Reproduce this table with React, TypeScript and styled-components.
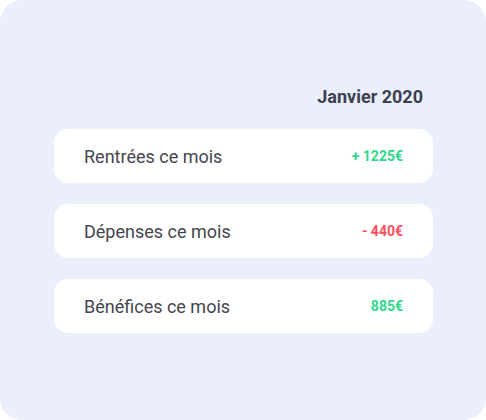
import React from "react";
import styled, { createGlobalStyle } from "styled-components";

const Global = createGlobalStyle`
  html, body { margin: 0; padding: 0; background: #ffffff; }
  body { font-family: Roboto, "Liberation Sans", sans-serif; }
`;

const Panel = styled.div`
  width: 486px;
  height: 420px;
  box-sizing: border-box;
  background: #ebeffc;
  border-radius: 22px;
  padding: 86px 53px 0 54px;
  display: flex;
  flex-direction: column;
`;

const Month = styled.div`
  align-self: flex-end;
  margin-right: 10px;
  font-size: 18px;
  font-weight: 700;
  color: #3d3f52;
  line-height: 22px;
  margin-bottom: 21px;
`;

const List = styled.div`
  display: flex;
  flex-direction: column;
  gap: 21px;
`;

const Card = styled.div`
  height: 54px;
  background: #ffffff;
  border-radius: 14px;
  display: flex;
  align-items: center;
  justify-content: space-between;
  padding: 0 30px;
`;

const Label = styled.span`
  font-size: 18px;
  color: #45464f;
`;

const Value = styled.span<{ $tone: "pos" | "neg" }>`
  font-size: 14px;
  font-weight: 700;
  color: ${(p) => (p.$tone === "pos" ? "#2fd88c" : "#ff4f5e")};
`;

const rows: { label: string; value: string; tone: "pos" | "neg" }[] = [
  { label: "Rentrées ce mois", value: "+ 1225€", tone: "pos" },
  { label: "Dépenses ce mois", value: "- 440€", tone: "neg" },
  { label: "Bénéfices ce mois", value: "885€", tone: "pos" },
];

export default function App() {
  return (
    <>
      <Global />
      <Panel>
        <Month>Janvier 2020</Month>
        <List>
          {rows.map((r) => (
            <Card key={r.label}>
              <Label>{r.label}</Label>
              <Value $tone={r.tone}>{r.value}</Value>
            </Card>
          ))}
        </List>
      </Panel>
    </>
  );
}
